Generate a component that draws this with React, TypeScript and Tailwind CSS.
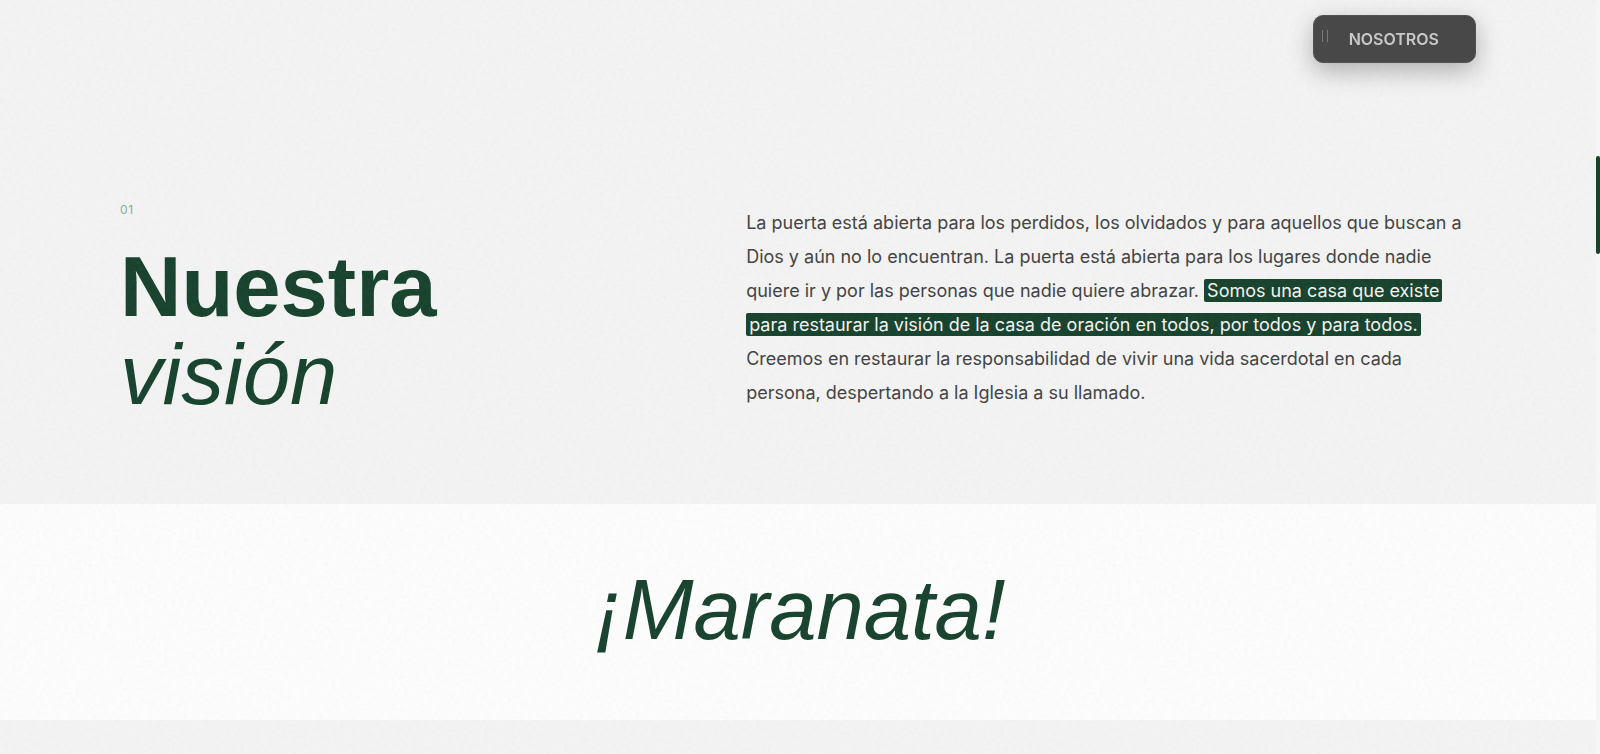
interface HeadingProps {
  strong: string
  light: string
}

// Fine paper grain laid over every section
function Grain() {
  return (
    <svg className="pointer-events-none absolute inset-0 z-10 h-full w-full opacity-[0.07]" aria-hidden="true">
      <filter id="grain">
        <feTurbulence type="fractalNoise" baseFrequency="0.25" numOctaves="3" stitchTiles="stitch" />
        <feColorMatrix type="saturate" values="0" />
      </filter>
      <rect width="100%" height="100%" filter="url(#grain)" />
    </svg>
  )
}

function NavPill() {
  return (
    <button
      type="button"
      className="fixed top-[15px] right-[124px] z-30 flex h-12 items-center rounded-[10px] border border-[#525252] bg-[#484848] pr-9 pl-2 text-base font-semibold text-[#c8c8c8] shadow-[0_8px_24px_rgba(0,0,0,0.28)]"
    >
      <span className="mr-[21px] mb-[6px] flex h-3 w-[6px] justify-between" aria-hidden="true">
        <span className="w-px bg-[#7a7a7a]" />
        <span className="w-px bg-[#7a7a7a]" />
      </span>
      NOSOTROS
    </button>
  )
}

function Heading({ strong, light }: HeadingProps) {
  return (
    <h2 className="font-['Liberation_Sans',Arial,sans-serif] text-[85px] leading-[88px] text-[#14402a]">
      <span className="block font-bold">{strong}</span>
      <em className="block font-normal italic">{light}</em>
    </h2>
  )
}

export default function App() {
  return (
    <main className="relative min-h-screen overflow-hidden bg-[#f4f4f4] font-[Inter,sans-serif]">
      <NavPill />

      <section className="px-[120px] pt-[197px] pb-[85px]">
        <div className="grid grid-cols-[5fr_7fr] items-center gap-[102px]">
          <div>
            <p className="mb-5 text-xs leading-[26px] tracking-wider text-[#7fae96]">01</p>
            <Heading strong="Nuestra" light="visión" />
          </div>
          <p className="text-[18px] leading-[34px] text-[#404040]">
            La puerta está abierta para los perdidos, los olvidados y para aquellos que buscan a Dios y aún no lo
            encuentran. La puerta está abierta para los lugares donde nadie quiere ir y por las personas que nadie
            quiere abrazar.{' '}
            <mark className="rounded-xs bg-[#14402a] box-decoration-clone px-[3px] py-px text-[#f4f4f4]">
              Somos una casa que existe para restaurar la visión de la casa de oración en todos, por todos y para
              todos.
            </mark>{' '}
            Creemos en restaurar la responsabilidad de vivir una vida sacerdotal en cada persona, despertando a la
            Iglesia a su llamado.
          </p>
        </div>
      </section>

      <section className="bg-[#fefefe] pt-[62px] pb-[66px] text-center">
        <p className="font-['Liberation_Sans',Arial,sans-serif] text-[85px] leading-[88px] text-[#14402a] italic">
          ¡Maranata!
        </p>
      </section>

      <Grain />

      {/* Scroll track and thumb */}
      <div className="fixed inset-y-0 right-0 z-20 w-1 bg-[#f5f5f5] pt-[156px]">
        <div className="h-[98px] rounded-full bg-[#18432b]" />
      </div>
    </main>
  )
}
